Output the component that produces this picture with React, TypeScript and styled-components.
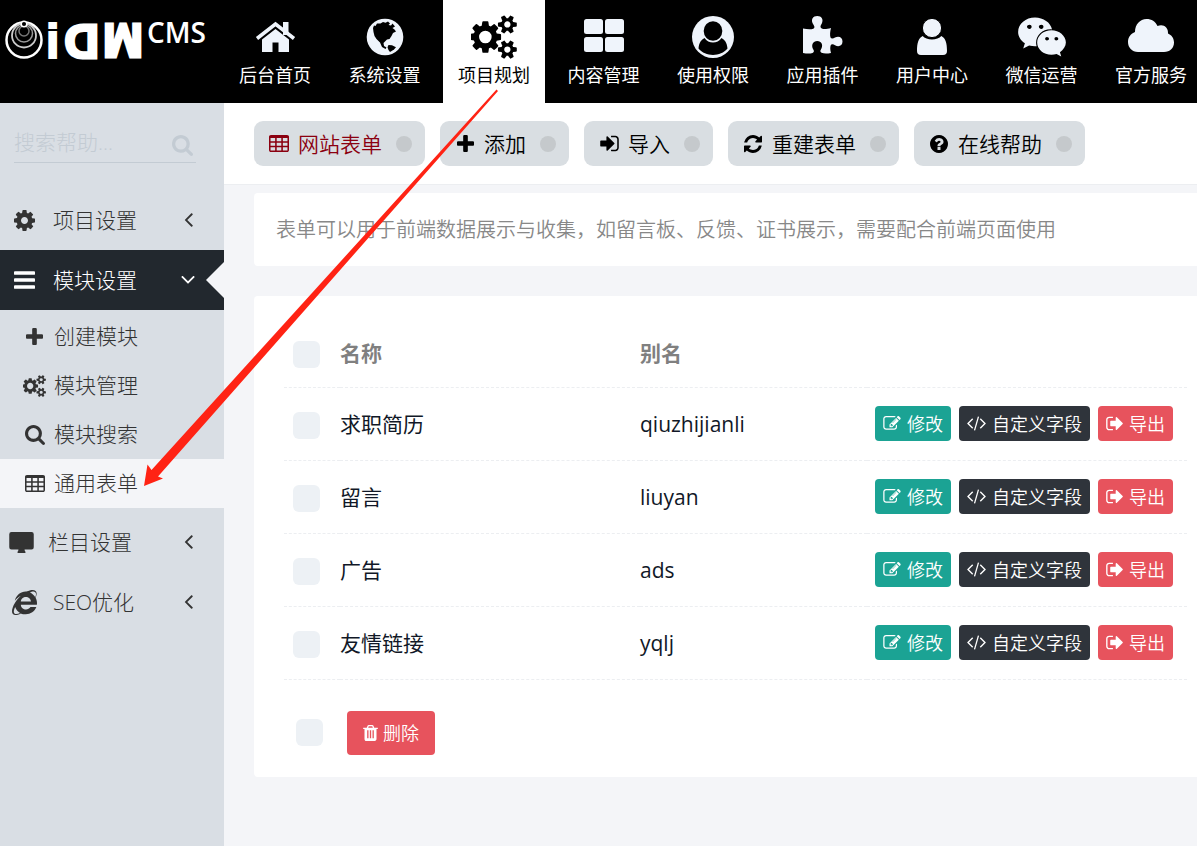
import React from 'react';
import styled, { createGlobalStyle, css } from 'styled-components';
import { FaInternetExplorer, FaWeixin } from 'react-icons/fa';

const GlobalStyle = createGlobalStyle`
  * { box-sizing: border-box; }
  body {
    margin: 0;
    background: #f4f5f8;
    color: #111827;
    font-family: "Open Sans", "Noto Sans CJK SC", sans-serif;
    font-size: 21px;
    overflow-x: hidden;
  }
  button, input { font: inherit; margin: 0; }
  button { cursor: pointer; border: 0; }
  a { color: inherit; text-decoration: none; }
`;

/* ---------- icons ---------- */

const cell = (x: number, y: number) => `M${x} ${y}h384v256h-384z`;
const plate =
  'M224 128h1344q66 0 113 47t47 113v1088q0 66-47 113t-113 47h-1344q-66 0-113-47t-47-113v-1088q0-66 47-113t113-47z';

const glyphs = {
  cog: 'M1152 896q0-106-75-181t-181-75-181 75-75 181 75 181 181 75 181-75 75-181zm512-109v222q0 12-8 23t-20 13l-185 28q-19 54-39 91 35 50 107 138 10 12 10 25t-9 23q-27 37-99 108t-94 71q-12 0-26-9l-138-108q-44 23-91 38-16 136-29 186-7 28-36 28h-222q-14 0-24.5-8.5t-11.5-21.5l-28-184q-49-16-90-37l-141 107q-10 9-25 9-14 0-25-11-126-114-165-168-7-10-7-23 0-12 8-23 15-21 51-66.5t54-70.5q-27-50-41-99l-183-27q-13-2-21-12.5t-8-23.5v-222q0-12 8-23t19-13l186-28q14-46 39-92-40-57-107-138-10-12-10-24 0-10 9-23 26-36 98.5-107.5t94.5-71.5q13 0 26 10l138 107q44-23 91-38 16-136 29-186 7-28 36-28h222q14 0 24.5 8.5t11.5 21.5l28 184q49 16 90 37l142-107q9-9 24-9 13 0 25 10 129 119 165 170 7 8 7 22 0 12-8 23-15 21-51 66.5t-54 70.5q26 50 41 98l183 28q13 2 21 12.5t8 23.5z',
  cogs: 'M832 896q0-106-75-181t-181-75-181 75-75 181 75 181 181 75 181-75 75-181zm768 512q0-52-38-90t-90-38-90 38-38 90q0 53 37.5 90.5t90.5 37.5 90.5-37.5 37.5-90.5zm0-1024q0-52-38-90t-90-38-90 38-38 90q0 53 37.5 90.5t90.5 37.5 90.5-37.5 37.5-90.5zm-384 421v185q0 10-7 19.5t-16 10.5l-155 24q-11 35-32 76 34 48 90 115 7 11 7 20 0 12-7 19-23 30-82.5 89.5t-78.5 59.5q-11 0-21-7l-115-90q-37 19-77 31-11 108-23 155-7 24-30 24h-186q-11 0-20-7.5t-10-17.5l-23-153q-34-10-75-31l-118 89q-7 7-20 7-11 0-21-8-144-133-144-160 0-9 7-19 10-14 41-53t47-61q-23-44-35-82l-152-24q-10-1-17-9.5t-7-19.5v-185q0-10 7-19.5t16-10.5l155-24q11-35 32-76-34-48-90-115-7-11-7-20 0-12 7-20 22-30 82-89t79-59q11 0 21 7l115 90q34-18 77-32 11-108 23-154 7-24 30-24h186q11 0 20 7.5t10 17.5l23 153q34 10 75 31l118-89q8-7 20-7 11 0 21 8 144 133 144 160 0 8-7 19-12 16-42 54t-45 60q23 48 34 82l152 23q10 2 17 10.5t7 19.5zm640 533v140q0 16-149 31-12 27-30 52 51 113 51 138 0 4-4 7-122 71-124 71-8 0-46-47t-52-68q-20 2-30 2t-30-2q-14 21-52 68t-46 47q-2 0-124-71-4-3-4-7 0-25 51-138-18-25-30-52-149-15-149-31v-140q0-16 149-31 13-29 30-52-51-113-51-138 0-4 4-7 4-2 35-20t59-34 30-16q8 0 46 46.5t52 67.5q20-2 30-2t30 2q51-71 92-112l6-2q4 0 124 70 4 3 4 7 0 25-51 138 17 23 30 52 149 15 149 31zm0-1024v140q0 16-149 31-12 27-30 52 51 113 51 138 0 4-4 7-122 71-124 71-8 0-46-47t-52-68q-20 2-30 2t-30-2q-14 21-52 68t-46 47q-2 0-124-71-4-3-4-7 0-25 51-138-18-25-30-52-149-15-149-31v-140q0-16 149-31 13-29 30-52-51-113-51-138 0-4 4-7 4-2 35-20t59-34 30-16q8 0 46 46.5t52 67.5q20-2 30-2t30 2q51-71 92-112l6-2q4 0 124 70 4 3 4 7 0 25-51 138 17 23 30 52 149 15 149 31z',
  search: 'M1216 832q0-185-131.5-316.5t-316.5-131.5-316.5 131.5-131.5 316.5 131.5 316.5 316.5 131.5 316.5-131.5 131.5-316.5zm512 832q0 52-38 90t-90 38q-54 0-90-38l-343-342q-179 124-399 124-143 0-273.5-55.5t-225-150-150-225-55.5-273.5 55.5-273.5 150-225 225-150 273.5-55.5 273.5 55.5 225 150 150 225 55.5 273.5q0 220-124 399l343 343q37 37 37 90z',
  plus: 'M1600 736v192q0 40-28 68t-68 28h-416v416q0 40-28 68t-68 28h-192q-40 0-68-28t-28-68v-416h-416q-40 0-68-28t-28-68v-192q0-40 28-68t68-28h416v-416q0-40 28-68t68-28h192q40 0 68 28t28 68v416h416q40 0 68 28t28 68z',
  table:
    plate +
    [192, 704, 1216].map((x) => [384, 768, 1152].map((y) => cell(x, y)).join('')).join(''),
  bars: 'M192 256h1408q64 0 64 64v128q0 64-64 64h-1408q-64 0-64-64v-128q0-64 64-64zM192 768h1408q64 0 64 64v128q0 64-64 64h-1408q-64 0-64-64v-128q0-64 64-64zM192 1280h1408q64 0 64 64v128q0 64-64 64h-1408q-64 0-64-64v-128q0-64 64-64z',
  desktop: 'M160 128h1472q160 0 160 160v960q0 160-160 160h-512q0 90 64 160v96h-576v-96q64-70 64-160h-512q-160 0-160-160v-960q0-160 160-160z',
  edit: 'M888 1184l116-116-152-152-116 116v56h96v96h56zm440-720q-16-16-33 1l-350 350q-17 17-1 33t33-1l350-350q17-17 1-33zm80 594v190q0 119-84.5 203.5t-203.5 84.5h-832q-119 0-203.5-84.5t-84.5-203.5v-832q0-119 84.5-203.5t203.5-84.5h832q63 0 117 25 15 7 18 23 3 17-9 29l-49 49q-14 14-32 8-23-6-45-6h-832q-66 0-113 47t-47 113v832q0 66 47 113t113 47h832q66 0 113-47t47-113v-126q0-13 9-22l64-64q15-15 35-7t20 29zm-96-738l288 288-672 672h-288v-288zm444 132l-92 92-288-288 92-92q28-28 68-28t68 28l152 152q28 28 28 68t-28 68z',
  code: 'M553 1399l-50 50q-10 10-23 10t-23-10l-466-466q-10-10-10-23t10-23l466-466q10-10 23-10t23 10l50 50q10 10 10 23t-10 23l-393 393 393 393q10 10 10 23t-10 23zm591-1067l-373 1291q-4 13-15.5 19.5t-23.5 2.5l-62-17q-13-4-19.5-15.5t-2.5-24.5l373-1291q4-13 15.5-19.5t23.5-2.5l62 17q13 4 19.5 15.5t2.5 24.5zm657 651l-466 466q-10 10-23 10t-23-10l-50-50q-10-10-10-23t10-23l393-393-393-393q-10-10-10-23t10-23l50-50q10-10 23-10t23 10l466 466q10 10 10 23t-10 23z',
  signOut: 'M704 1440q0 4 1 20t.5 26.5-3 23.5-10 19.5-20.5 6.5h-320q-119 0-203.5-84.5t-84.5-203.5v-704q0-119 84.5-203.5t203.5-84.5h320q13 0 22.5 9.5t9.5 22.5q0 4 1 20t.5 26.5-3 23.5-10 19.5-20.5 6.5h-320q-66 0-113 47t-47 113v704q0 66 47 113t113 47h312l11.5 1 11.5 3 8 5.5 7 9 2 13.5zm928-544q0 26-19 45l-544 544q-19 19-45 19t-45-19-19-45v-288h-448q-26 0-45-19t-19-45v-384q0-26 19-45t45-19h448v-288q0-26 19-45t45-19 45 19l544 544q19 19 19 45z',
  signIn: 'M1312 896q0 26-19 45l-544 544q-19 19-45 19t-45-19-19-45v-288h-448q-26 0-45-19t-19-45v-384q0-26 19-45t45-19h448v-288q0-26 19-45t45-19 45 19l544 544q19 19 19 45zm352-352v704q0 119-84.5 203.5t-203.5 84.5h-320q-13 0-22.5-9.5t-9.5-22.5q0-4-1-20t-.5-26.5 3-23.5 10-19.5 20.5-6.5h320q66 0 113-47t47-113v-704q0-66-47-113t-113-47h-312l-11.5-1-11.5-3-8-5.5-7-9-2-13.5q0-4-1-20t-.5-26.5 3-23.5 10-19.5 20.5-6.5h320q119 0 203.5 84.5t84.5 203.5z',
  refresh: 'M1639 1056q0 5-1 7-64 268-268 434.5t-478 166.5q-146 0-282.5-55t-243.5-157l-129 129q-19 19-45 19t-45-19-19-45v-448q0-26 19-45t45-19h448q26 0 45 19t19 45-19 45l-137 137q71 66 161 102t187 36q134 0 250-65t186-179q11-17 53-117 8-23 30-23h192q13 0 22.5 9.5t9.5 22.5zm25-800v448q0 26-19 45t-45 19h-448q-26 0-45-19t-19-45 19-45l138-138q-148-137-349-137-134 0-250 65t-186 179q-11 17-53 117-8 23-30 23h-199q-13 0-22.5-9.5t-9.5-22.5v-7q65-268 270-434.5t480-166.5q146 0 284 55.5t245 156.5l130-129q19-19 45-19t45 19 19 45z',
  question: 'M1024 1376v-192q0-14-9-23t-23-9h-192q-14 0-23 9t-9 23v192q0 14 9 23t23 9h192q14 0 23-9t9-23zm256-672q0-88-55.5-163t-138.5-116-170-41q-243 0-371 213-15 24 8 42l132 100q7 6 19 6 16 0 25-12 53-68 86-92 34-24 86-24 48 0 85.5 26t37.5 59q0 38-20 61t-68 45q-63 28-115.5 86.5t-52.5 125.5v36q0 14 9 23t23 9h192q14 0 23-9t9-23q0-19 21.5-49.5t54.5-49.5q32-18 49-28.5t46-35 44.5-48 28-60.5 12.5-81zm384 192q0 209-103 385.5t-279.5 279.5-385.5 103-385.5-103-279.5-279.5-103-385.5 103-385.5 279.5-279.5 385.5-103 385.5 103 279.5 279.5 103 385.5z',
  trash: 'M576 640h128v768h-128zM832 640h128v768h-128zM1088 640h128v768h-128zM672 384h448l-48-117q-7-9-17-11h-317q-10 2-17 11zM1600 416v64q0 14-9 23t-23 9h-96v948q0 83-47 143.5t-113 60.5h-832q-66 0-113-58.5t-47-141.5v-952h-96q-14 0-23-9t-9-23v-64q0-14 9-23t23-9h309l70-167q15-37 54-63t79-26h320q40 0 79 26t54 63l70 167h309q14 0 23 9t9 23z',
  angleLeft: 'M1203 544q0 13-10 23l-393 393 393 393q10 10 10 23t-10 23l-50 50q-10 10-23 10t-23-10l-466-466q-10-10-10-23t10-23l466-466q10-10 23-10t23 10l50 50q10 10 10 23z',
  angleDown: 'M1395 736q0 13-10 23l-466 466q-10 10-23 10t-23-10l-466-466q-10-10-10-23t10-23l50-50q10-10 23-10t23 10l393 393 393-393q10-10 23-10t23 10l50 50q10 10 10 23z',
};

/* Visible bounds of each glyph, so its size prop is the drawn width. */
const bounds: Record<keyof typeof glyphs, string> = {
  cog: '128 128 1536 1536',
  cogs: '0 0 1856 1792',
  search: '64 128 1664 1664',
  plus: '192 128 1408 1408',
  table: '64 128 1664 1408',
  bars: '128 256 1536 1280',
  desktop: '0 128 1792 1536',
  edit: '0 128 1792 1536',
  code: '-20 224 1832 1472',
  signOut: '64 192 1568 1408',
  signIn: '128 192 1536 1408',
  refresh: '128 128 1536 1536',
  question: '128 128 1536 1536',
  trash: '192 128 1408 1536',
  angleLeft: '560 460 660 1000',
  angleDown: '380 660 1030 600',
};

type GlyphName = keyof typeof glyphs;

const Glyph = ({ name, width }: { name: GlyphName; width: number }) => {
  const [, , w, h] = bounds[name].split(' ').map(Number);
  return (
    <svg
      width={width}
      height={Math.round((width * h) / w)}
      viewBox={bounds[name]}
      fill="currentColor"
      fillRule="evenodd"
      aria-hidden="true"
    >
      <path d={glyphs[name]} />
    </svg>
  );
};

const NavSvg = ({ children }: { children: React.ReactNode }) => (
  <svg width="48" height="42" viewBox="0 0 48 42" fill="currentColor" aria-hidden="true">
    {children}
  </svg>
);

const HomeIcon = () => (
  <NavSvg>
    <path d="M6 22.500L24.500 8L43 22.500" fill="none" stroke="currentColor" strokeWidth="3.600" />
    <path d="M32 6h5.500v13h-5.500z" />
    <path d="M11 23.500L24.500 13L38 23.500V36H27.500V26.500H21.500V36H11z" />
  </NavSvg>
);

const GlobeIcon = () => (
  <NavSvg>
    <circle cx="24" cy="21" r="18.300" />
    <path
      fill="#000"
      d="M12 12L13 9.500L14.500 10L16 7.500L19.500 7.500L22 6L24.500 6.800L27 5.500L29 7.500L27.500 9L30 9.500L31.500 7.500L34 10.500L31.500 12L33.500 13.500L35 15.500L32 17L30.500 20L28.500 23L26 23.500L24 25.500L22.500 27L23 30L25.500 31.500L24.500 33L21 31L19 26.500L15.500 23L13.500 20L12.500 16z"
    />
    <path fill="#000" d="M27.500 29L31 29.300L35 31.300L33 33.500L29 36L27.500 34L26.500 31.300z" />
  </NavSvg>
);

const GridIcon = () => (
  <NavSvg>
    <rect x="4" y="3" width="19" height="15" rx="2.500" />
    <rect x="25" y="3" width="19" height="15" rx="2.500" />
    <rect x="4" y="21" width="19" height="15" rx="2.500" />
    <rect x="25" y="21" width="19" height="15" rx="2.500" />
  </NavSvg>
);

const RoleIcon = () => (
  <NavSvg>
    <circle cx="24" cy="21" r="21" />
    <ellipse cx="24" cy="15" rx="9.300" ry="9.800" fill="#000" />
    <path
      fill="#000"
      d="M9.500 32.500C10 26.500 12.500 23.500 15.500 22C19.500 28 28.500 28 32.500 22C35.500 23.500 38 26.500 38.500 32.500C31.500 41 16.500 41 9.500 32.500z"
    />
  </NavSvg>
);

const PluginIcon = () => (
  <NavSvg>
    <path d="M4 12.500C8 13.500 12 13.600 14.300 12.800C16.500 11.500 15 9.500 14 8C11.500 3.500 14 0 18.300 0C22.500 0 25 3.500 22.600 8C21.500 9.500 20.800 11.500 22.800 12.500C25 13.500 28 13 32 12C31 16 30.800 19 31.500 21.500C32.500 23.300 34.500 22.500 36 21.500C40 19.500 43.500 21.500 43.500 25.500C43.500 29.500 40 31.500 36 29.300C34.500 28 32.500 27.500 31.700 29.300C31 31.500 31.200 34 32 37C28 37.800 25 37.800 22.500 36.800C20.500 35.500 21.500 34.200 22.200 33C24.500 29 22.500 25 18.200 25C14 25 12 29 14 33C14.800 34.500 15.800 35.800 13.500 37C11 37.800 8 37.800 4 37z" />
  </NavSvg>
);

const UserIcon = () => (
  <NavSvg>
    <path d="M14.700 20C18 24.500 30 24.500 33.300 20C37.500 22 39 27 39 35Q39 39 35 39H13Q9 39 9 35C9 27 10.500 22 14.700 20z" />
    <circle cx="24" cy="12" r="9.600" stroke="#000" strokeWidth="1" />
  </NavSvg>
);

const CloudIcon = () => (
  <NavSvg>
    <path d="M11 36C5 36 1 31.500 1 26C1 21 4 17.500 8 16C8 8.500 13 3 19.500 3C24.500 3 28.500 5.500 30.500 10C36 7.500 41.500 11 41 17.500C44.500 19 47 22 47 26.500C47 32 43 36 37 36z" />
  </NavSvg>
);

const Logo = () => (
  <svg width="210" height="70" viewBox="0 -7 210 70" role="img" aria-label="iDW CMS">
    <g fill="none" stroke="#fff">
      <circle cx="24" cy="27" r="17.500" strokeWidth="2.500" />
      <circle cx="24" cy="22.500" r="12" strokeWidth="1.800" stroke="#ccc" />
      <circle cx="24" cy="20.500" r="8.500" strokeWidth="1.500" stroke="#999" />
      <circle cx="24" cy="18" r="5" strokeWidth="1.500" stroke="#777" />
      <circle cx="24" cy="11" r="2.800" strokeWidth="1.500" fill="#000" />
    </g>
    <g
      fill="#fff"
      stroke="#fff"
      strokeWidth="3"
      fontFamily="Liberation Sans, sans-serif"
      fontWeight="700"
      fontSize="48"
    >
      <text x="46" y="45" strokeWidth="2">i</text>
      <text x="-99" y="45" transform="scale(-1 1)">D</text>
      <text x="103" y="11" transform="rotate(180 123 11)">M</text>
    </g>
    <text x="147" y="30" fill="#fff" fontFamily="Open Sans, sans-serif" fontWeight="600" fontSize="28">
      CMS
    </text>
  </svg>
);

/* ---------- header ---------- */

const Header = styled.header`
  display: flex;
  height: 103px;
  background: #000;
  color: #fff;
`;

const Brand = styled.a`
  flex: 0 0 224px;
  padding-top: 6px;
`;

const TopNav = styled.nav`
  display: flex;
  flex: 1;
  justify-content: space-between;
  margin-right: -5px;
`;

const TopLink = styled.a<{ $active?: boolean }>`
  display: flex;
  flex-direction: column;
  align-items: center;
  width: 102px;
  padding-top: 16px;
  font-size: 18px;
  line-height: 34px;
  white-space: nowrap;
  ${({ $active }) => $active && css`background: #fff; color: #000;`}
`;

const TopIcon = styled.span<{ $active?: boolean }>`
  display: flex;
  align-items: center;
  justify-content: center;
  height: 42px;
  color: ${({ $active }) => ($active ? '#000' : '#eff4fb')};
`;

/* ---------- sidebar ---------- */

const Shell = styled.div`
  display: flex;
  min-height: calc(100vh - 103px);
`;

const Sidebar = styled.aside`
  flex: 0 0 224px;
  min-width: 0;
  background: #d9dee4;
  color: #333;
  font-weight: 300;
`;

const SearchBox = styled.form`
  display: flex;
  align-items: center;
  height: 40px;
  margin: 20px 28px 27px 14px;
  border-bottom: 1px solid #c3cbd3;
  color: #c3cbd3;
`;

const SearchInput = styled.input`
  flex: 1;
  width: 100%;
  min-width: 0;
  padding: 0 0 2px;
  border: 0;
  outline: 0;
  background: transparent;
  &::placeholder { color: #c3cbd3; opacity: 1; }
`;

const SearchButton = styled.button`
  display: flex;
  padding: 6px 3px 0;
  background: none;
  color: inherit;
`;

const MenuLink = styled.a<{ $open?: boolean; $wide?: boolean }>`
  position: relative;
  display: flex;
  align-items: center;
  gap: ${({ $wide }) => ($wide ? 14 : 18)}px;
  height: 60px;
  padding: 0 31px 0 ${({ $wide }) => ($wide ? 9 : 14)}px;
  ${({ $open }) =>
    $open &&
    css`
      padding-right: 29px;
      background: #22282e;
      color: #fff;
      &::after {
        content: '';
        position: absolute;
        right: 0;
        top: 12px;
        border: 18px solid transparent;
        border-left-width: 0;
        border-right-color: #f4f5f8;
      }
    `}
`;

const MenuLabel = styled.span`
  flex: 1;
  padding-bottom: 3px;
`;

const SubMenu = styled.div`
  padding: 2px 0 4px;
`;

const SubLink = styled.a<{ $active?: boolean }>`
  display: flex;
  align-items: center;
  gap: 8px;
  height: 49px;
  padding-left: 23px;
  background: ${({ $active }) => ($active ? '#f4f5f8' : 'transparent')};
`;

const IconSlot = styled.span<{ $width: number }>`
  display: flex;
  flex: none;
  justify-content: center;
  width: ${({ $width }) => $width}px;
  svg { flex: none; }
`;

/* ---------- main area ---------- */

const Main = styled.main`
  flex: 1;
  min-width: 0;
`;

const Toolbar = styled.div`
  display: flex;
  gap: 15px;
  height: 82px;
  padding: 18px 30px;
  background: #fff;
  border-bottom: 1px solid #eceef1;
`;

const ToolButton = styled.button<{ $current?: boolean }>`
  display: flex;
  align-items: center;
  height: 45px;
  padding: 0 13px 0 15px;
  border-radius: 9px;
  background: #d9dee2;
  color: ${({ $current }) => ($current ? '#8b0010' : '#000')};
  font-weight: 350;
  white-space: nowrap;
`;

const ToolLabel = styled.span`
  margin: 0 14px 0 9px;
  padding-bottom: 2px;
`;

const Dot = styled.span`
  width: 16px;
  height: 16px;
  border-radius: 50%;
  background: #c5c9cc;
`;

const Card = styled.section`
  margin-left: 30px;
  background: #fff;
  border-radius: 4px 0 0 4px;
`;

const Notice = styled(Card)`
  margin-top: 8px;
  padding: 22px;
  color: #888;
  font-size: 20px;
  font-weight: 350;
  line-height: 29px;
`;

const ListCard = styled(Card)`
  margin-top: 30px;
  padding: 24px 10px 22px 30px;
`;

const Table = styled.table`
  width: 100%;
  border-collapse: collapse;
  table-layout: fixed;
  text-align: left;
  th, td {
    height: 73px;
    padding: 0;
    border-bottom: 1px dashed #eceef1;
  }
  th { height: 67px; color: #808080; }
`;

const CheckCol = styled.col`width: 56px;`;
const NameCol = styled.col`width: 300px;`;
const ActionCol = styled.col`width: 320px;`;

const Check = styled.input.attrs({ type: 'checkbox' })`
  appearance: none;
  display: block;
  width: 27px;
  height: 27px;
  border-radius: 6px;
  background: #edf1f5;
`;

const CheckCell = styled.span`
  display: block;
  padding: 3px 0 0 9px;
`;

const CellText = styled.span`
  display: block;
  padding-bottom: 2px;
`;

const Actions = styled.div`
  display: flex;
  justify-content: flex-end;
  gap: 8px;
  padding-right: 14px;
`;

const tones = { green: '#1ba394', dark: '#2f343b', red: '#e7535d' };

const ActionButton = styled.button<{ $tone: keyof typeof tones; $large?: boolean }>`
  display: flex;
  align-items: center;
  gap: ${({ $large }) => ($large ? 5 : 6)}px;
  height: ${({ $large }) => ($large ? 44 : 35)}px;
  padding: 0 ${({ $large }) => ($large ? 16 : 8)}px;
  border-radius: 4px;
  background: ${({ $tone }) => tones[$tone]};
  color: #fff;
  font-size: 18px;
  font-weight: 350;
  white-space: nowrap;
`;

const BulkBar = styled.div`
  display: flex;
  align-items: center;
  gap: 24px;
  padding: 31px 0 0 12px;
`;

/* Red pointer from the top menu entry to the side menu entry. */
const Pointer = styled.svg`
  position: absolute;
  left: 0;
  top: 0;
  pointer-events: none;
`;

const topItems: { label: string; icon: React.ReactNode; active?: boolean }[] = [
  { label: '后台首页', icon: <HomeIcon /> },
  { label: '系统设置', icon: <GlobeIcon /> },
  { label: '项目规划', icon: <Glyph name="cogs" width={46} />, active: true },
  { label: '内容管理', icon: <GridIcon /> },
  { label: '使用权限', icon: <RoleIcon /> },
  { label: '应用插件', icon: <PluginIcon /> },
  { label: '用户中心', icon: <UserIcon /> },
  { label: '微信运营', icon: <FaWeixin size={50} /> },
  { label: '官方服务', icon: <CloudIcon /> },
];

const subItems: { label: string; icon: GlyphName; width: number; active?: boolean }[] = [
  { label: '创建模块', icon: 'plus', width: 17 },
  { label: '模块管理', icon: 'cogs', width: 23 },
  { label: '模块搜索', icon: 'search', width: 20 },
  { label: '通用表单', icon: 'table', width: 20, active: true },
];

const tools: { label: string; icon: GlyphName; width: number; current?: boolean }[] = [
  { label: '网站表单', icon: 'table', width: 20, current: true },
  { label: '添加', icon: 'plus', width: 17 },
  { label: '导入', icon: 'signIn', width: 19 },
  { label: '重建表单', icon: 'refresh', width: 18 },
  { label: '在线帮助', icon: 'question', width: 18 },
];

const forms = [
  { name: '求职简历', alias: 'qiuzhijianli' },
  { name: '留言', alias: 'liuyan' },
  { name: '广告', alias: 'ads' },
  { name: '友情链接', alias: 'yqlj' },
];

export default function App() {
  return (
    <>
      <GlobalStyle />
      <Header>
        <Brand href="#"><Logo /></Brand>
        <TopNav>
          {topItems.map(({ label, icon, active }) => (
            <TopLink key={label} href="#" $active={active}>
              <TopIcon $active={active}>{icon}</TopIcon>
              {label}
            </TopLink>
          ))}
        </TopNav>
      </Header>
      <Shell>
        <Sidebar>
          <SearchBox>
            <SearchInput aria-label="搜索帮助" placeholder="搜索帮助..." />
            <SearchButton type="button" aria-label="搜索"><Glyph name="search" width={21} /></SearchButton>
          </SearchBox>
          <MenuLink href="#">
            <IconSlot $width={21}><Glyph name="cog" width={21} /></IconSlot>
            <MenuLabel>项目设置</MenuLabel>
            <Glyph name="angleLeft" width={9} />
          </MenuLink>
          <MenuLink href="#" $open>
            <IconSlot $width={21}><Glyph name="bars" width={21} /></IconSlot>
            <MenuLabel>模块设置</MenuLabel>
            <Glyph name="angleDown" width={14} />
          </MenuLink>
          <SubMenu>
            {subItems.map(({ label, icon, width, active }) => (
              <SubLink key={label} href="#" $active={active}>
                <IconSlot $width={23}><Glyph name={icon} width={width} /></IconSlot>
                <MenuLabel>{label}</MenuLabel>
              </SubLink>
            ))}
          </SubMenu>
          <MenuLink href="#" $wide>
            <IconSlot $width={25}><Glyph name="desktop" width={25} /></IconSlot>
            <MenuLabel>栏目设置</MenuLabel>
            <Glyph name="angleLeft" width={9} />
          </MenuLink>
          <MenuLink href="#">
            <IconSlot $width={21}><FaInternetExplorer size={25} /></IconSlot>
            <MenuLabel>SEO优化</MenuLabel>
            <Glyph name="angleLeft" width={9} />
          </MenuLink>
        </Sidebar>
        <Main>
          <Toolbar>
            {tools.map(({ label, icon, width, current }) => (
              <ToolButton key={label} type="button" $current={current}>
                <IconSlot $width={20}><Glyph name={icon} width={width} /></IconSlot>
                <ToolLabel>{label}</ToolLabel>
                <Dot />
              </ToolButton>
            ))}
          </Toolbar>
          <Notice>表单可以用于前端数据展示与收集，如留言板、反馈、证书展示，需要配合前端页面使用</Notice>
          <ListCard>
            <Table>
              <colgroup>
                <CheckCol />
                <NameCol />
                <col />
                <ActionCol />
              </colgroup>
              <thead>
                <tr>
                  <th><CheckCell><Check aria-label="全选" /></CheckCell></th>
                  <th><CellText>名称</CellText></th>
                  <th><CellText>别名</CellText></th>
                  <th />
                </tr>
              </thead>
              <tbody>
                {forms.map(({ name, alias }) => (
                  <tr key={alias}>
                    <td><CheckCell><Check aria-label={name} /></CheckCell></td>
                    <td><CellText>{name}</CellText></td>
                    <td>{alias}</td>
                    <td>
                      <Actions>
                        <ActionButton type="button" $tone="green">
                          <Glyph name="edit" width={18} />
                          <CellText>修改</CellText>
                        </ActionButton>
                        <ActionButton type="button" $tone="dark">
                          <Glyph name="code" width={19} />
                          <CellText>自定义字段</CellText>
                        </ActionButton>
                        <ActionButton type="button" $tone="red">
                          <Glyph name="signOut" width={17} />
                          <CellText>导出</CellText>
                        </ActionButton>
                      </Actions>
                    </td>
                  </tr>
                ))}
              </tbody>
            </Table>
            <BulkBar>
              <Check aria-label="选择全部" />
              <ActionButton type="button" $tone="red" $large>
                <Glyph name="trash" width={15} />
                <CellText>删除</CellText>
              </ActionButton>
            </BulkBar>
          </ListCard>
        </Main>
      </Shell>
      <Pointer width="500" height="490" viewBox="0 0 500 490" aria-hidden="true">
        <path fill="#ff2314" d="M496.500 89.500L498 91L158 476.500L163 478.500L144 486L147.500 464.500L151.500 470z" />
      </Pointer>
    </>
  );
}
